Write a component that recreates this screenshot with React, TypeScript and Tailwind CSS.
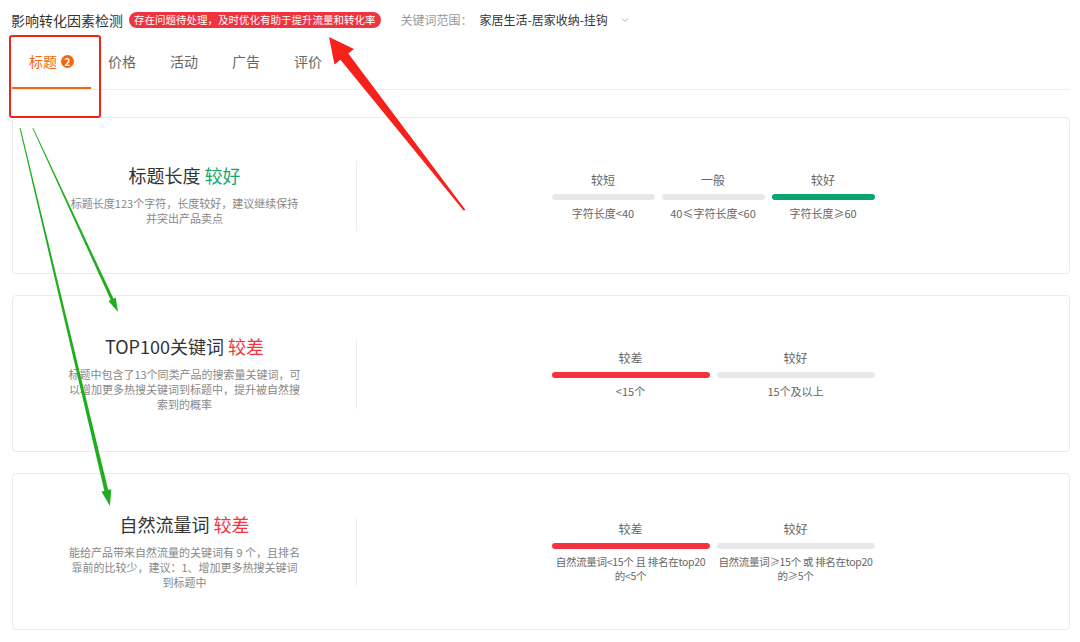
import React from "react";
import { ChevronDown } from "lucide-react";

type Seg = { label: string; color: string; below: string[] };

function Card({
  title,
  grade,
  gradeColor,
  desc,
  segs,
  segW,
  belowCls,
}: {
  title: string;
  grade: string;
  gradeColor: string;
  desc: string[];
  segs: Seg[];
  segW: string;
  belowCls: string;
}) {
  return (
    <div className="h-[157px] border border-[#ebebeb] rounded-[4px] flex items-center bg-white">
      <div className="w-[343px] flex flex-col items-center pb-[2px]">
        <div className="text-[18px] leading-[24px] text-[#333] whitespace-nowrap">
          {title} <span style={{ color: gradeColor }}>{grade}</span>
        </div>
        <div className="mt-[9px] flex flex-col items-center text-[11px] leading-[15px] text-[#888]">
          {desc.map((d, i) => (
            <div key={i} className="whitespace-nowrap">
              {d}
            </div>
          ))}
        </div>
      </div>
      <div className="w-px h-[70px] bg-[#eeeeee]" />
      <div className="flex-1 flex justify-center">
        <div className="flex gap-[7px]">
          {segs.map((s, i) => (
            <div key={i} className={`${segW} flex flex-col items-center`}>
              <div className="text-[12px] leading-[16px] text-[#666]">{s.label}</div>
              <div
                className="mt-[6px] h-[6px] w-full rounded-full"
                style={{ backgroundColor: s.color }}
              />
              <div className={`mt-[6px] flex flex-col items-center leading-[14px] text-[#666] ${belowCls}`}>
                {s.below.map((b, j) => (
                  <div key={j} className="whitespace-nowrap">
                    {b}
                  </div>
                ))}
              </div>
            </div>
          ))}
        </div>
      </div>
    </div>
  );
}

const GRAY = "#e8e8e8";
const RED = "#f5333f";
const GREEN = "#0aa46c";

export default function App() {
  return (
    <div className="relative w-[1080px] h-[642px] bg-white overflow-hidden font-['Noto_Sans_CJK_SC','Noto_Sans',sans-serif]">
      <div className="pl-[12px] pr-[10px]">
        {/* header */}
        <div className="h-[40px] flex items-center -ml-px">
          <span className="text-[14px] text-[#333]">影响转化因素检测</span>
          <span className="ml-[6px] h-[16px] px-[5px] rounded-full bg-[#ef3340] text-white text-[10.5px] leading-[16px] whitespace-nowrap">
            存在问题待处理，及时优化有助于提升流量和转化率
          </span>
          <span className="ml-[20px] text-[12px] text-[#999]">关键词范围：</span>
          <span className="ml-[7px] text-[12px] text-[#333]">家居生活-居家收纳-挂钩</span>
          <ChevronDown className="ml-[11px] text-[#999]" size={12} strokeWidth={1.5} />
        </div>
        {/* tabs */}
        <div className="h-[50px] flex border-b border-[#eeeeee]">
          <div className="h-full flex items-center px-[17px] pb-[4px] border-b-2 border-[#f5650f]">
            <span className="text-[14px] text-[#f5650f]">标题</span>
            <span className="ml-[4px] w-[13px] h-[13px] rounded-full bg-[#f5650f] text-white text-[10px] font-bold leading-none flex items-center justify-center">
              2
            </span>
          </div>
          {["价格", "活动", "广告", "评价"].map((t) => (
            <div key={t} className="h-full flex items-center px-[17px] pb-[4px] border-b-2 border-transparent">
              <span className="text-[14px] text-[#666]">{t}</span>
            </div>
          ))}
        </div>
        {/* cards */}
        <div className="mt-[27px] flex flex-col gap-[21px]">
          <Card
            title="标题长度"
            grade="较好"
            gradeColor="#10a870"
            desc={["标题长度123个字符，长度较好，建议继续保持", "并突出产品卖点"]}
            segW="w-[103px]"
            belowCls="text-[11px]"
            segs={[
              { label: "较短", color: GRAY, below: ["字符长度<40"] },
              { label: "一般", color: GRAY, below: ["40≤字符长度<60"] },
              { label: "较好", color: GREEN, below: ["字符长度≥60"] },
            ]}
          />
          <Card
            title="TOP100关键词"
            grade="较差"
            gradeColor={RED}
            desc={[
              "标题中包含了13个同类产品的搜索量关键词，可",
              "以增加更多热搜关键词到标题中，提升被自然搜",
              "索到的概率",
            ]}
            segW="w-[158px]"
            belowCls="text-[11px]"
            segs={[
              { label: "较差", color: RED, below: ["<15个"] },
              { label: "较好", color: GRAY, below: ["15个及以上"] },
            ]}
          />
          <Card
            title="自然流量词"
            grade="较差"
            gradeColor={RED}
            desc={[
              "能给产品带来自然流量的关键词有 9 个，且排名",
              "靠前的比较少，建议：1、增加更多热搜关键词",
              "到标题中",
            ]}
            segW="w-[158px]"
            belowCls="text-[10.5px] tracking-[-0.3px]"
            segs={[
              { label: "较差", color: RED, below: ["自然流量词<15个 且 排名在top20", "的<5个"] },
              { label: "较好", color: GRAY, below: ["自然流量词≥15个 或 排名在top20", "的≥5个"] },
            ]}
          />
        </div>
      </div>

      {/* annotation overlays */}
      <div className="absolute left-[9px] top-[35px] w-[92px] h-[83px] border-2 border-[#f0241b] rounded-[3px] pointer-events-none" />
      <svg className="absolute inset-0 pointer-events-none" width="1080" height="642" viewBox="0 0 1080 642">
        <polygon
          fill="#f5211a"
          points="329,37 354,49 348.3,53.6 465.5,210 463.5,210.5 340.5,59.8 334.5,64.5"
        />
        <polygon
          fill="#1fae1f"
          points="118,312 115.7,297.6 113.5,298.7 33.3,128 32.5,128.3 110.7,299.9 108.5,301"
        />
        <polygon
          fill="#1fae1f"
          points="110,506 111.2,489.2 108.2,489.9 20.6,128 19.6,128.2 104.4,490.9 101.4,491.6"
        />
      </svg>
    </div>
  );
}
